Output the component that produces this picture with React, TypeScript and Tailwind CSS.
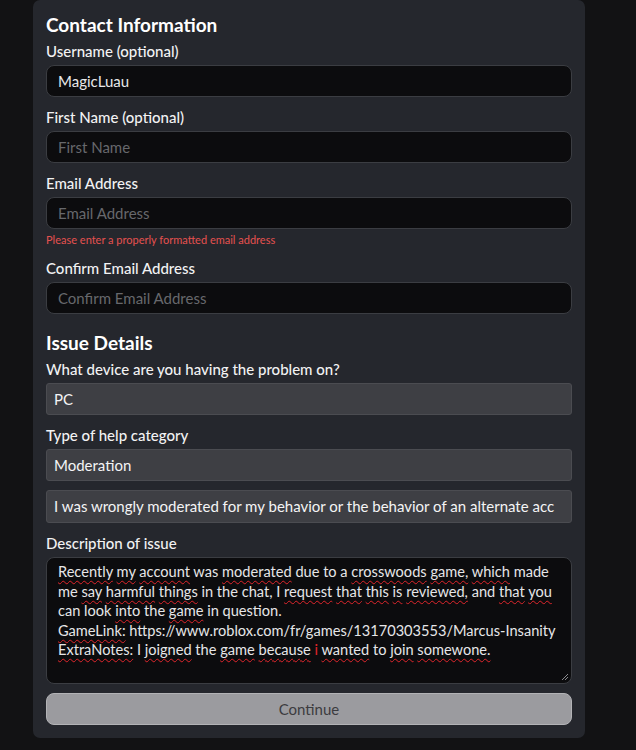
import type { ReactNode } from "react";

const Label = ({ children, className = "" }: { children: ReactNode; className?: string }) => (
  <div className={`text-[15px] leading-[20px] font-medium text-[#f2f2f3] ${className}`}>{children}</div>
);

const TextInput = ({ value, placeholder, className = "" }: { value?: string; placeholder?: string; className?: string }) => (
  <div
    className={`flex items-center h-[32px] px-[11px] rounded-[8px] border border-[#3b3d42] bg-[#0c0c0e] text-[15px] ${className}`}
  >
    {value ? <span className="text-[#e8e8ea]">{value}</span> : <span className="text-[#67686c]">{placeholder}</span>}
  </div>
);

const SelectBox = ({ value, className = "" }: { value: string; className?: string }) => (
  <div
    className={`flex items-center h-[32px] px-[7px] rounded-[3px] border border-[#4b4c51] bg-[#3e3f44] text-[15px] text-[#f4f4f5] overflow-hidden whitespace-nowrap ${className}`}
  >
    {value}
  </div>
);

// spell-check squiggle
const W = ({ children }: { children: ReactNode }) => (
  <span className="underline decoration-wavy decoration-[#e0262b] decoration-1 underline-offset-[3px]">{children}</span>
);

export default function App() {
  return (
    <div className="min-h-screen bg-[#121214] font-['Lato','Noto_Sans',sans-serif]">
      <div className="ml-[33px] w-[552px] rounded-[7px] bg-[#25272d] px-[13px] pt-[13px] pb-[13px]">
        <h2 className="text-[19px] leading-[24px] font-bold text-white">Contact Information</h2>

        <Label className="mt-1">Username (optional)</Label>
        <TextInput className="mt-1" value="MagicLuau" />

        <Label className="mt-[10px]">First Name (optional)</Label>
        <TextInput className="mt-1" placeholder="First Name" />

        <Label className="mt-[10px]">Email Address</Label>
        <TextInput className="mt-1" placeholder="Email Address" />
        <div className="mt-[3px] text-[11px] leading-[16px] text-[#e5514f]">Please enter a properly formatted email address</div>

        <Label className="mt-[10px]">Confirm Email Address</Label>
        <TextInput className="mt-1" placeholder="Confirm Email Address" />

        <h2 className="mt-[17px] text-[19px] leading-[24px] font-bold text-white">Issue Details</h2>

        <Label className="mt-1">What device are you having the problem on?</Label>
        <SelectBox className="mt-1" value="PC" />

        <Label className="mt-[10px]">Type of help category</Label>
        <SelectBox className="mt-1" value="Moderation" />
        <SelectBox className="mt-[9px] h-[33px]" value="I was wrongly moderated for my behavior or the behavior of an alternate acc" />

        <Label className="mt-[10px]">Description of issue</Label>
        <div className="relative mt-1 h-[127px] rounded-[8px] border border-[#3b3d42] bg-[#0c0c0e] px-[11px] pt-[4px] text-[14.6px] leading-[19.5px] text-[#e6e6e8] whitespace-nowrap">
          <div>
            <W>Recently</W> <W>my</W> <W>account</W> was <W>moderated</W> due to a <W>crosswoods</W> <W>game,</W> <W>which</W> made
          </div>
          <div>
            me <W>say</W> <W>harmful</W> <W>things</W> in the chat, I <W>request</W> <W>that</W> <W>this</W> <W>is</W> <W>reviewed,</W> and <W>that</W> <W>you</W>
          </div>
          <div>
            can look <W>into</W> the <W>game</W> in question.
          </div>
          <div>
            <W>GameLink:</W> https://www.roblox.com/fr/games/13170303553/Marcus-Insanity
          </div>
          <div>
            <W>ExtraNotes:</W> I <W>joigned</W> the <W>game</W> <W>because</W> <span className="text-[#e0262b]">i</span> <W>wanted</W> to <W>join</W> <W>somewone.</W>
          </div>
          <svg className="absolute right-[2px] bottom-[2px]" width="8" height="8" viewBox="0 0 8 8">
            <path d="M7 1 L1 7 M7 4 L4 7" stroke="#8a8a8e" strokeWidth="1" />
          </svg>
        </div>

        <button className="mt-[9px] flex h-[32px] w-full items-center justify-center rounded-[8px] border border-[#b3b3b6] bg-[#9b9b9f] text-[15px] text-[#3c3c40]">
          Continue
        </button>
      </div>
    </div>
  );
}
